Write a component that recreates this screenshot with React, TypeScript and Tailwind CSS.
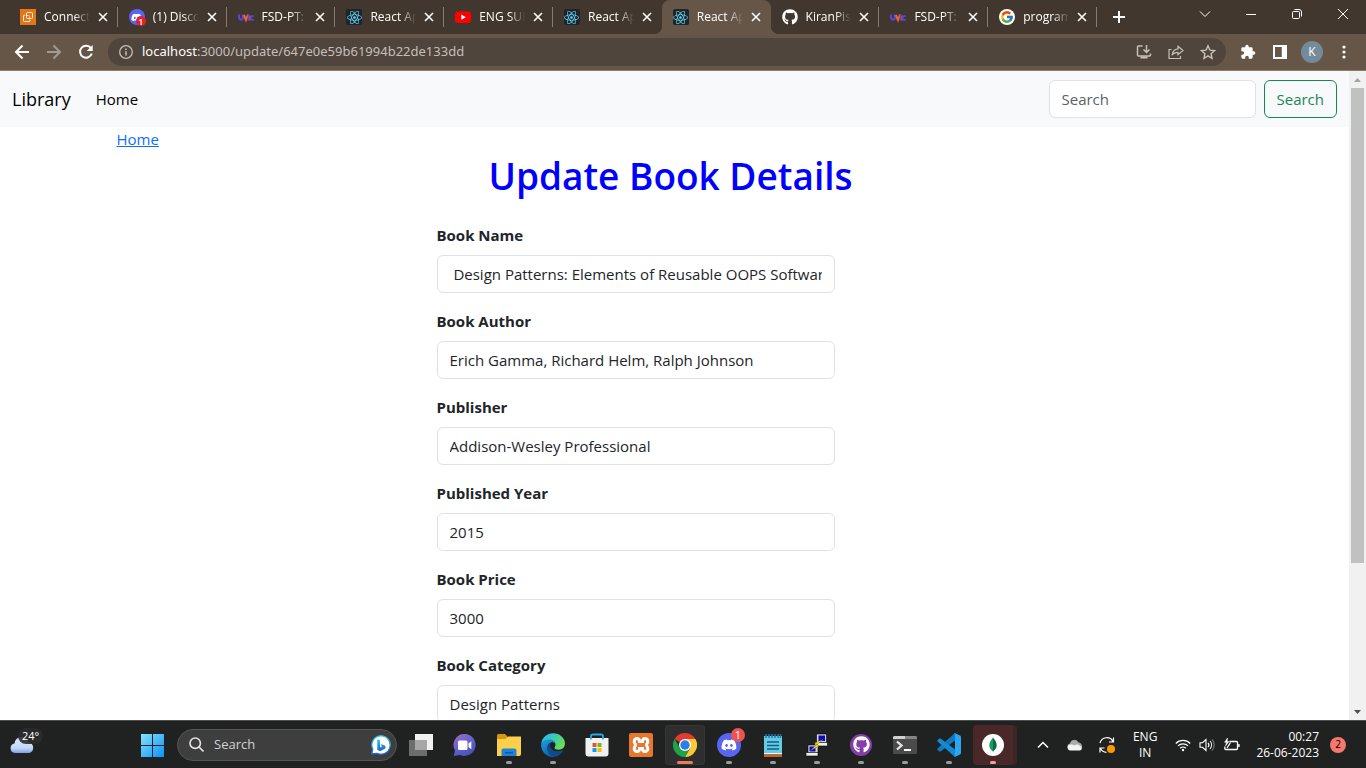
import type { ReactNode } from "react";
import { FaDiscord, FaGithub, FaReact } from "react-icons/fa";
import { FcGoogle } from "react-icons/fc";

/* ---------- Favicons ---------- */

function AwsIcon() {
  return (
    <svg width="16" height="16" viewBox="0 0 16 16" fill="none">
      <defs>
        <linearGradient id="aws" x1="0" y1="16" x2="16" y2="0">
          <stop stopColor="#c9551b" />
          <stop offset="1" stopColor="#fb9a16" />
        </linearGradient>
      </defs>
      <rect width="16" height="16" fill="url(#aws)" />
      <g stroke="#fff" strokeOpacity="0.85">
        <rect x="6.5" y="3.5" width="6" height="6" rx="1" />
        <path d="M5 6H4.500a1 1 0 0 0-1 1v4.500a1 1 0 0 0 1 1H9a1 1 0 0 0 1-1V11" />
        <path d="M5.500 6.500h3a1 1 0 0 1 1 1v3" strokeOpacity="0.6" />
      </g>
    </svg>
  );
}

function DiscordFavicon() {
  return (
    <span className="relative flex size-4 items-center justify-center rounded-full bg-[#5865f2] text-white">
      <FaDiscord size={11} />
      <span className="absolute -right-px -bottom-px flex size-[10px] items-center justify-center rounded-full bg-[#e3202b] text-[9px] leading-none font-semibold">
        1
      </span>
    </span>
  );
}

function UnicIcon() {
  return (
    <svg width="16" height="16" viewBox="0 0 16 16" fill="none">
      <path d="M1 5.500v3.200a1.900 1.900 0 0 0 3.800 0V5.500" stroke="#5b46e8" strokeWidth="1.900" />
      <path d="M5.800 6 8 11l2-5.500" stroke="#f0642f" strokeWidth="2" />
      <path d="M10.300 5v6.500" stroke="#5b46e8" strokeWidth="1.200" />
      <path d="M12 6.500v5" stroke="#f0642f" strokeWidth="1.200" />
      <path d="M15.800 7.400a2 2 0 1 0 0 3.200" stroke="#5b46e8" strokeWidth="1.500" />
    </svg>
  );
}

function ReactIcon() {
  return (
    <span className="flex size-4 items-center justify-center rounded-[2px] bg-[#20232a] text-[#61dafb]">
      <FaReact size={15} />
    </span>
  );
}

function YoutubeIcon() {
  return (
    <svg width="16" height="16" viewBox="0 0 16 16">
      <rect y="2.500" width="16" height="11.500" rx="3" fill="#f00" />
      <path d="M6.300 5.600v5.200l4.500-2.600z" fill="#fff" />
    </svg>
  );
}

function GoogleIcon() {
  return (
    <span className="flex size-4 items-center justify-center rounded-full bg-white">
      <FcGoogle size={14} />
    </span>
  );
}

/* ---------- Browser chrome ---------- */

type Tab = { title: string; icon: ReactNode; active?: boolean; divider?: boolean };

const tabs: Tab[] = [
  { title: "Connect to instance", icon: <AwsIcon />, divider: true },
  { title: "(1) Discord", icon: <DiscordFavicon />, divider: true },
  { title: "FSD-PT: Class", icon: <UnicIcon />, divider: true },
  { title: "React App", icon: <ReactIcon />, divider: true },
  { title: "ENG SUB", icon: <YoutubeIcon />, divider: true },
  { title: "React App", icon: <ReactIcon /> },
  { title: "React App", icon: <ReactIcon />, active: true },
  { title: "KiranPisal", icon: <FaGithub size={16} />, divider: true },
  { title: "FSD-PT: Class", icon: <UnicIcon />, divider: true },
  { title: "programming", icon: <GoogleIcon />, divider: true },
];

function CloseGlyph() {
  return (
    <svg width="10" height="10" viewBox="0 0 10 10" stroke="currentColor" strokeWidth="1.600">
      <path d="m1 1 8 8M9 1 1 9" />
    </svg>
  );
}

function TabStrip() {
  return (
    <div className="flex h-[34px] shrink-0 bg-[#42372e] pl-[9px] text-white">
      <div className="flex w-[1088px]">
        {tabs.map((tab, i) => (
          <div
            key={i}
            className={`relative flex min-w-0 flex-1 items-center pr-[10px] pl-[11px] ${
              tab.active ? "rounded-t-lg bg-[#665647]" : ""
            }`}
          >
            {tab.active && (
              <>
                <span className="absolute bottom-0 -left-2 size-2 bg-[radial-gradient(circle_at_0_0,transparent_8px,#665647_8px)]" />
                <span className="absolute -right-2 bottom-0 size-2 bg-[radial-gradient(circle_at_100%_0,transparent_8px,#665647_8px)]" />
              </>
            )}
            <span className="shrink-0">{tab.icon}</span>
            <span className="ml-2 min-w-0 flex-1 overflow-hidden mask-r-from-65% mask-r-to-100% text-xs whitespace-nowrap">
              {tab.title}
            </span>
            <button aria-label="Close tab" className="ml-2 shrink-0">
              <CloseGlyph />
            </button>
            {tab.divider && <span className="absolute top-[7px] right-0 h-5 w-px bg-[#857b72]" />}
          </div>
        ))}
      </div>
      <button aria-label="New tab" className="ml-4 flex items-center">
        <svg width="12" height="12" viewBox="0 0 12 12" stroke="currentColor" strokeWidth="2">
          <path d="M6 0v12M0 6h12" />
        </svg>
      </button>
      <div className="ml-auto flex h-7 items-center">
        <button aria-label="Search tabs" className="flex w-[46px] justify-center">
          <svg width="12" height="12" viewBox="0 0 12 12" fill="none" stroke="currentColor">
            <path d="m1 3.500 5 5 5-5" />
          </svg>
        </button>
        <button aria-label="Minimize" className="flex w-[46px] justify-center">
          <svg width="10" height="10" viewBox="0 0 10 10" stroke="currentColor">
            <path d="M0 5.500h10" />
          </svg>
        </button>
        <button aria-label="Restore" className="flex w-[46px] justify-center">
          <svg width="10" height="10" viewBox="0 0 10 10" fill="none" stroke="currentColor">
            <rect x="0.500" y="2.500" width="7" height="7" rx="1" />
            <path d="M2.500 .5H7a2.500 2.500 0 0 1 2.500 2.500v4.500" />
          </svg>
        </button>
        <button aria-label="Close window" className="flex w-[46px] justify-center">
          <svg width="10" height="10" viewBox="0 0 10 10" stroke="currentColor">
            <path d="m0 0 10 10M10 0 0 10" />
          </svg>
        </button>
      </div>
    </div>
  );
}

function Toolbar() {
  return (
    <div className="flex h-[37px] shrink-0 items-center border-b border-[#8c7b6e] bg-[#665647] pr-[14px] pl-[14px] text-white">
      <button aria-label="Back">
        <svg width="16" height="16" viewBox="0 0 16 16" fill="none" stroke="currentColor" strokeWidth="2">
          <path d="M15 8H2.500M8.500 1.500 2 8l6.500 6.500" />
        </svg>
      </button>
      <button aria-label="Forward" className="ml-4 text-[#a39a91]">
        <svg width="16" height="16" viewBox="0 0 16 16" fill="none" stroke="currentColor" strokeWidth="2">
          <path d="M1 8h12.500M7.500 1.500 14 8l-6.500 6.500" />
        </svg>
      </button>
      <button aria-label="Reload" className="ml-4">
        <svg width="16" height="16" viewBox="0 0 16 16" fill="none" stroke="currentColor" strokeWidth="2">
          <path d="M13 4.300A6 6 0 1 0 13.800 9.500" />
          <path d="M14.700 1v6h-6z" fill="currentColor" stroke="none" />
        </svg>
      </button>
      <div className="ml-[14px] flex h-7 flex-1 items-center rounded-full bg-[#50453c] pr-[10px] pl-[11px] text-[#c4bfbb]">
        <svg width="14" height="14" viewBox="0 0 14 14" fill="none" stroke="currentColor" strokeWidth="1.300">
          <circle cx="7" cy="7" r="6.300" />
          <path d="M7 6.200v4.300M7 3.500v1.400" strokeWidth="1.500" />
        </svg>
        <span className="ml-[9px] flex-1 font-['Noto_Sans',sans-serif] text-[13px]">
          <span className="text-white">localhost</span>:3000/update/647e0e59b61994b22de133dd
        </span>
        <div className="flex items-center gap-4">
          <button aria-label="Install app">
            <svg width="16" height="16" viewBox="0 0 16 16" fill="none" stroke="currentColor" strokeWidth="1.500">
              <path d="M6.500 2H2.500a1 1 0 0 0-1 1v8a1 1 0 0 0 1 1h11a1 1 0 0 0 1-1V9.500M10.500 1v7M7.500 5.500l3 3 3-3" />
              <path d="M4.500 13.500h7" strokeWidth="2" />
            </svg>
          </button>
          <button aria-label="Share">
            <svg width="16" height="16" viewBox="0 0 16 16" fill="none" stroke="currentColor" strokeWidth="1.200">
              <path d="M3.500 5.500H1v9h11.500V12" />
              <path d="M10 2.200 15 6.500l-5 4.200V8.300c-3 0-4.800 1-6 3 .4-3.400 2.500-6 6-6.400z" />
            </svg>
          </button>
          <button aria-label="Bookmark">
            <svg width="16" height="16" viewBox="0 0 16 16" fill="none" stroke="currentColor" strokeWidth="1.400">
              <path d="m8 1.800 1.900 4.300 4.600.5-3.400 3.100.9 4.600-4-2.400-4 2.400.9-4.600L1.500 6.600l4.600-.5z" />
            </svg>
          </button>
        </div>
      </div>
      <button aria-label="Extensions" className="ml-[14px]">
        <svg width="16" height="16" viewBox="0 0 24 24" fill="currentColor">
          <path d="M20.500 11H19V7a2 2 0 0 0-2-2h-4V3.500a2.500 2.500 0 0 0-5 0V5H4a2 2 0 0 0-2 2v3.800h1.500a2.700 2.700 0 0 1 0 5.400H2V20a2 2 0 0 0 2 2h3.800v-1.500a2.700 2.700 0 0 1 5.400 0V22H17a2 2 0 0 0 2-2v-4h1.500a2.500 2.500 0 0 0 0-5z" />
        </svg>
      </button>
      <button aria-label="Side panel" className="ml-[17px]">
        <svg width="14" height="14" viewBox="0 0 14 14" fill="none" stroke="currentColor" strokeWidth="2">
          <path d="M1 1h12v12H1z" />
          <path d="M11 1v12" strokeWidth="4.500" />
        </svg>
      </button>
      <button className="ml-[14px] flex size-[22px] items-center justify-center rounded-full bg-[#748c99] text-xs">
        K
      </button>
      <button aria-label="Menu" className="ml-[13px]">
        <svg width="16" height="16" viewBox="0 0 16 16" fill="currentColor">
          <circle cx="8" cy="3" r="1.600" />
          <circle cx="8" cy="8" r="1.600" />
          <circle cx="8" cy="13" r="1.600" />
        </svg>
      </button>
    </div>
  );
}

/* ---------- Library page ---------- */

const fields = [
  { id: "name", label: "Book Name", value: "\u00a0Design Patterns: Elements of Reusable OOPS Software" },
  { id: "author", label: "Book Author", value: "Erich Gamma, Richard Helm, Ralph Johnson" },
  { id: "publisher", label: "Publisher", value: "Addison-Wesley Professional" },
  { id: "year", label: "Published Year", value: "2015" },
  { id: "price", label: "Book Price", value: "3000" },
  { id: "category", label: "Book Category", value: "Design Patterns" },
];

function Navbar() {
  return (
    <nav className="flex h-14 items-center bg-[#f8f9fa] px-3 text-[15px] text-black">
      <a href="#library" className="text-lg">
        Library
      </a>
      <a href="#home" className="ml-[25px]">
        Home
      </a>
      <form className="ml-auto flex gap-2">
        <input
          type="search"
          aria-label="Search"
          placeholder="Search"
          className="h-[38px] w-[207px] rounded-md border border-[#dee2e6] bg-white px-3 placeholder:text-[#5c6268]"
        />
        <button type="button" className="h-[38px] rounded-md border border-[#198754] px-3 text-[#198754]">
          Search
        </button>
      </form>
    </nav>
  );
}

function BookForm() {
  return (
    <main className="mx-auto max-w-[1140px] px-3 text-[15px] leading-6">
      <a href="#home" className="block w-fit text-[#0d6efd] underline">
        Home
      </a>
      <h1 className="mb-[22px] pr-2 text-center text-[37px] leading-[50px] font-semibold text-[#0000ff]">
        Update Book Details
      </h1>
      <form className="ml-80 flex w-[398px] flex-col gap-4">
        {fields.map((f) => (
          <div key={f.id} className="flex flex-col gap-2">
            <label htmlFor={f.id} className="font-bold">
              {f.label}
            </label>
            <input
              id={f.id}
              defaultValue={f.value}
              className="h-[38px] rounded-md border border-[#dee2e6] bg-white px-3"
            />
          </div>
        ))}
      </form>
    </main>
  );
}

function Scrollbar() {
  return (
    <div className="flex w-[17px] shrink-0 flex-col items-center bg-[#f1f1f1]">
      <svg width="17" height="17" viewBox="0 0 17 17">
        <path d="M5 11h7L8.500 7z" fill="#a3a3a3" />
      </svg>
      <div className="h-3/4 max-h-[475px] w-[13px] bg-[#c1c1c1]" />
      <svg width="17" height="17" viewBox="0 0 17 17" className="mt-auto">
        <path d="M5 7h7l-3.500 4z" fill="#505050" />
      </svg>
    </div>
  );
}

/* ---------- Taskbar ---------- */

function WeatherIcon() {
  return (
    <svg width="25" height="18" viewBox="0 0 25 18">
      <defs>
        <linearGradient id="wx" x1="0" y1="0" x2="0" y2="1">
          <stop stopColor="#dbe8fb" />
          <stop offset="0.700" stopColor="#c2d7f7" />
          <stop offset="1" stopColor="#7d9ee6" />
        </linearGradient>
      </defs>
      <path d="M5 17a4.800 4.800 0 0 1-.5-9.500C5 3.500 8 1 11.500 1c3.200 0 5.800 2 6.600 5.200a5.500 5.500 0 0 1 1 10.800z" fill="url(#wx)" />
    </svg>
  );
}

function WindowsIcon() {
  return (
    <svg width="24" height="24" viewBox="0 0 24 24">
      <defs>
        <linearGradient id="win" x1="0" y1="0" x2="24" y2="24" gradientUnits="userSpaceOnUse">
          <stop stopColor="#8be4ff" />
          <stop offset="1" stopColor="#0a93f5" />
        </linearGradient>
      </defs>
      <path d="M1 1h11v11H1zM13 1h11v11H13zM1 13h11v11H1zM13 13h11v11H13z" fill="url(#win)" />
    </svg>
  );
}

function BingIcon() {
  return (
    <svg width="20" height="20" viewBox="0 0 20 20">
      <defs>
        <linearGradient id="bing" x1="0" y1="0" x2="0" y2="1">
          <stop stopColor="#32c6e8" />
          <stop offset="1" stopColor="#1b62d8" />
        </linearGradient>
      </defs>
      <path d="M10 .8a9.200 9.200 0 1 1-4 17.500L.8 19l.9-5A9.200 9.200 0 0 1 10 .8z" fill="#fff" stroke="url(#bing)" strokeWidth="1.300" />
      <path d="M6.300 4.200 9 5.200v7.300l1.800-1-.9-2.500 4 1.500c1 .8 1 2.500 0 3.200L9 16.300l-2.700-1.600z" fill="url(#bing)" />
    </svg>
  );
}

function TaskViewIcon() {
  return (
    <svg width="24" height="24" viewBox="0 0 24 24">
      <path d="M6 1h18v16H6z" fill="#f1f1f1" />
      <path d="M0 7h18v16H0z" fill="#6d6d6d" />
      <path d="M6 7h12v10H6z" fill="#a6a6a6" />
    </svg>
  );
}

function ChatIcon() {
  return (
    <svg width="24" height="24" viewBox="0 0 24 24">
      <defs>
        <linearGradient id="chat" x1="0" y1="0" x2="0.600" y2="1">
          <stop stopColor="#a06fc0" />
          <stop offset="0.600" stopColor="#5f62ce" />
          <stop offset="1" stopColor="#4c50ba" />
        </linearGradient>
      </defs>
      <path d="M12 1a11 11 0 1 1-5 21L.8 23l1.200-5.500A11 11 0 0 1 12 1z" fill="url(#chat)" />
      <rect x="5" y="7.500" width="9.500" height="9.500" rx="1.500" fill="#fff" />
      <path d="m15.500 10.500 2.800-2.300v8L15.500 14z" fill="#fff" />
    </svg>
  );
}

function ExplorerIcon() {
  return (
    <svg width="24" height="24" viewBox="0 0 24 24">
      <path d="M0 2.500A1.500 1.500 0 0 1 1.500 1H8l2.500 2.500V8H0z" fill="#d99611" />
      <path d="M0 6h8.500L11 3.500h13V21a2 2 0 0 1-2 2H0z" fill="#fdd04c" />
      <path d="M4.500 17.500a2 2 0 0 1 2-2h11a2 2 0 0 1 2 2V23h-15z" fill="#2083d5" />
      <path d="M8 19h8v1.500H8z" fill="#0b5da9" />
    </svg>
  );
}

function EdgeIcon() {
  return (
    <svg width="24" height="24" viewBox="0 0 24 24">
      <defs>
        <linearGradient id="edgeA" x1="0" y1="0" x2="1" y2="0.400">
          <stop stopColor="#2bb3ef" />
          <stop offset="0.500" stopColor="#35c8c0" />
          <stop offset="1" stopColor="#68dd55" />
        </linearGradient>
        <linearGradient id="edgeB" x1="0" y1="0" x2="0.500" y2="1">
          <stop stopColor="#1fa2df" />
          <stop offset="1" stopColor="#0c5fb0" />
        </linearGradient>
      </defs>
      <path d="M.2 10.500C1 4.500 5.800.2 12 .2c7 0 12 5 12 10.300 0 3.800-2.800 6.200-6.200 6.200-2.800 0-4.300-1-4.300-2 0-.7 1-1.200 1-3 0-2.800-2.300-4.500-5.500-4.500C5.500 7.200 2 8.200.2 10.500z" fill="url(#edgeA)" />
      <path d="M.1 12C.1 8.500 3.600 6.500 8 6.500c4 0 6.500 2.400 6.500 4.700 0-1-1-2-2.800-2-3.200 0-5.200 2.500-5.200 5.800 0 4.500 3.700 8 8 8.600-.8.300-1.700.4-2.600.4A12 12 0 0 1 .1 12z" fill="url(#edgeB)" />
      <path d="M9.600 10.200c-2 1.200-3.200 3.200-3.200 5.600 0 4.700 4 8 8 7.900 3.300-.8 6.200-3 7.800-6 .2-.4-.2-.7-.5-.5-4.800 2.400-12.200 1-12.500-4.700 0-.8.100-1.600.4-2.300z" fill="#114a8b" />
    </svg>
  );
}

function StoreIcon() {
  return (
    <svg width="24" height="24" viewBox="0 0 24 24">
      <path d="M6 6.500V3.200A1.700 1.700 0 0 1 7.700 1.500h8.600A1.700 1.700 0 0 1 18 3.200v3.300" fill="none" stroke="#2aa9e8" strokeWidth="1.800" />
      <path d="M.5 5h23v15.500a3 3 0 0 1-3 3h-17a3 3 0 0 1-3-3z" fill="#f1f1f1" />
      <path d="M6 5v1.500M18 5v1.500" stroke="#2aa9e8" strokeWidth="1.800" />
      <path d="M7.500 10h4v4h-4z" fill="#f25022" />
      <path d="M12.500 10h4v4h-4z" fill="#7fba00" />
      <path d="M7.500 15h4v4h-4z" fill="#00a4ef" />
      <path d="M12.500 15h4v4h-4z" fill="#ffb900" />
    </svg>
  );
}

function XamppIcon() {
  return (
    <span className="flex size-6 items-center justify-center rounded-[2px] bg-[#e8762c] text-white">
      <svg width="20" height="18" viewBox="0 0 20 18" fill="none" stroke="currentColor" strokeWidth="3">
        <path d="M6 2.500c2 0 2.500 1.500 2.500 3h3c0-1.500.5-3 2.500-3a2.800 2.800 0 0 1 2.800 3c0 2-1.300 2.300-1.300 3.500s1.300 1.500 1.300 3.500a2.800 2.800 0 0 1-2.800 3c-2 0-2.500-1.500-2.500-3h-3c0 1.500-.5 3-2.500 3a2.800 2.800 0 0 1-2.800-3c0-2 1.300-2.300 1.300-3.500S3.200 7.500 3.200 5.500a2.800 2.800 0 0 1 2.800-3z" />
      </svg>
    </span>
  );
}

function ChromeIcon() {
  return (
    <svg width="24" height="24" viewBox="0 0 24 24">
      <path d="M12 12 1.600 6A12 12 0 0 1 22.400 6z" fill="#e33b2e" />
      <path d="M12 6h10.400A12 12 0 0 1 12 24l5.200-9z" fill="#fcc934" />
      <path d="M1.600 6 6.800 15 12 18l5.200-3L12 24A12 12 0 0 1 1.600 6z" fill="#1ea446" />
      <circle cx="12" cy="12" r="6" fill="#fff" />
      <circle cx="12" cy="12" r="4.700" fill="#2f7de9" />
    </svg>
  );
}

function DiscordAppIcon() {
  return (
    <span className="relative flex size-6 items-center justify-center rounded-full bg-[#5865f2] text-white">
      <FaDiscord size={16} />
      <span className="absolute -top-[5px] -right-1 flex size-[14px] items-center justify-center rounded-full bg-[#ee5350] text-[11px] leading-none">
        1
      </span>
    </span>
  );
}

function NotepadIcon() {
  return (
    <svg width="24" height="24" viewBox="0 0 24 24">
      <path d="M3 3h18v18H3z" fill="#66cbe4" />
      <path d="M3 20h18v1.500H3z" fill="#f3f3f3" />
      <path d="M3 21.500h18V24H3z" fill="#c8631d" />
      <path d="M5 1v4M8 1v4M11 1v4M14 1v4M17 1v4M19.500 1v4" stroke="#1d7aa5" strokeWidth="1.500" />
      <path d="M6 9h12M6 12.500h12M6 16h12" stroke="#125f84" strokeWidth="1.700" />
    </svg>
  );
}

function PuttyIcon() {
  return (
    <svg width="24" height="24" viewBox="0 0 24 24">
      <g stroke="#000" strokeWidth="0.600">
        <path d="M11.500 1h10v9h-10z" fill="#d6d6d6" />
        <path d="M9.500 9.500h13v3.500h-13z" fill="#eee" />
        <path d="M3 12h10v8H3z" fill="#d6d6d6" />
        <path d="M1 19.500h12V23H1z" fill="#eee" />
      </g>
      <path d="M13.500 2.500h6.500v5.500h-6.500zM4.500 13.500h6v5h-6z" fill="#0808cf" />
      <path d="m18 6.500-8 3.500 2 1.500-6.500 6 8.500-4.500-2-1.500z" fill="#ffee12" stroke="#7a7000" strokeWidth="0.500" />
    </svg>
  );
}

function GithubAppIcon() {
  return (
    <span className="flex size-[22px] items-center justify-center rounded-full bg-[#863cab] text-white">
      <FaGithub size={17} />
    </span>
  );
}

function TerminalIcon() {
  return (
    <svg width="24" height="24" viewBox="0 0 24 24">
      <rect y="3" width="24" height="18" rx="1.500" fill="#4b4b4b" />
      <path d="M0 6V4.500A1.500 1.500 0 0 1 1.500 3H12v3z" fill="#d0d0d0" />
      <path d="M12 3h10.500A1.500 1.500 0 0 1 24 4.500V6H12z" fill="#858585" />
      <path d="m4 8.500 4.500 4L4 16.500" fill="none" stroke="#e6e6e6" strokeWidth="2.300" />
      <path d="M11 17h7" stroke="#fff" strokeWidth="2" />
    </svg>
  );
}

function VscodeIcon() {
  return (
    <svg width="24" height="24" viewBox="0 0 24 24">
      <path d="M18 0 .5 15.500c-.4.500-.3 1 0 1.300l1.600 1.500c.4.400 1 .4 1.500.1L20 6z" fill="#0f79c4" />
      <path d="M18 24 .5 8.500c-.4-.5-.3-1 0-1.300l1.600-1.500c.4-.4 1-.4 1.500-.1L20 18z" fill="#1489d4" />
      <path d="M17 .2c.4-.2.800-.2 1.200 0l4.800 2.300c.6.300 1 .8 1 1.500v16c0 .7-.4 1.200-1 1.500l-4.800 2.300c-.4.200-.8.200-1.200 0 .6 0 1-.5 1-1.200V1.400c0-.7-.4-1.200-1-1.200z" fill="#2ba6ef" />
    </svg>
  );
}

function MongoIcon() {
  return (
    <svg width="22" height="22" viewBox="0 0 22 22">
      <circle cx="11" cy="11" r="11" fill="#fff" />
      <path d="M11 3.500C8.500 6.500 7.300 8.800 7.300 11.300c0 2.600 1.500 4.500 3.400 6l.3 1.500z" fill="#12a05f" />
      <path d="M11 3.500c2.500 3 3.700 5.300 3.700 7.800 0 2.600-1.500 4.500-3.400 6l-.3 1.500z" fill="#0b6b43" />
    </svg>
  );
}

type AppEntry = { name: string; icon: ReactNode; state?: "running" | "focused" | "alert" };

const apps: AppEntry[] = [
  { name: "Task view", icon: <TaskViewIcon /> },
  { name: "Chat", icon: <ChatIcon /> },
  { name: "File Explorer", icon: <ExplorerIcon />, state: "running" },
  { name: "Edge", icon: <EdgeIcon />, state: "running" },
  { name: "Store", icon: <StoreIcon /> },
  { name: "XAMPP", icon: <XamppIcon /> },
  { name: "Chrome", icon: <ChromeIcon />, state: "focused" },
  { name: "Discord", icon: <DiscordAppIcon />, state: "running" },
  { name: "Notepad", icon: <NotepadIcon />, state: "running" },
  { name: "PuTTY", icon: <PuttyIcon />, state: "running" },
  { name: "GitHub Desktop", icon: <GithubAppIcon />, state: "running" },
  { name: "Terminal", icon: <TerminalIcon />, state: "running" },
  { name: "VS Code", icon: <VscodeIcon />, state: "running" },
  { name: "MongoDB Compass", icon: <MongoIcon />, state: "alert" },
];

const tile = {
  none: "",
  running: "",
  focused: "bg-[#2e2e2e] ring-1 ring-[#363636] ring-inset",
  alert: "bg-[#4a282a] shadow-[4px_0_0_#3f2426]",
};

const marker = {
  none: "bg-transparent",
  running: "w-[6px] bg-[#9b9b9b]",
  focused: "w-4 bg-[#f2785c]",
  alert: "w-[6px] bg-[#f99ba0]",
};

function Tray() {
  return (
    <div className="ml-auto flex items-center pr-5 text-xs text-white">
      <button aria-label="Show hidden icons">
        <svg width="12" height="12" viewBox="0 0 12 12" fill="none" stroke="currentColor" strokeWidth="1.500">
          <path d="m1 8.500 5-5 5 5" />
        </svg>
      </button>
      <svg className="ml-[18px]" width="16" height="12" viewBox="0 0 16 12">
        <path d="M3.500 11A3.300 3.300 0 0 1 3 4.500 4.500 4.500 0 0 1 11.500 3.500 4 4 0 0 1 13 11z" fill="#a9a9a9" />
        <path d="M3.500 11.500a3 3 0 0 1 .3-6c1.500-.2 2.500.5 3.500 1 1.500-1.500 4.500-1.500 5.500.5a2.300 2.300 0 0 1 .2 4.500z" fill="#f4f4f4" />
      </svg>
      <svg className="ml-4" width="16" height="18" viewBox="0 0 16 18" fill="none" stroke="currentColor" strokeWidth="1.200">
        <path d="M1 7a7 7 0 0 1 13-1.500M14.500 1.500v4.500H10M1 16.500V12h4.500M1.500 12.500a7 7 0 0 0 6 3.800" />
        <circle cx="12" cy="13" r="4" fill="#ff9800" stroke="none" />
      </svg>
      <div className="ml-[18px] text-center leading-4">
        ENG
        <br />
        IN
      </div>
      <svg className="ml-[18px]" width="16" height="14" viewBox="0 0 16 14" fill="none" stroke="currentColor" strokeWidth="1.200">
        <path d="M.8 5.500a10 10 0 0 1 14.400 0M3 7.900a7 7 0 0 1 10 0M5.200 10.200a4 4 0 0 1 5.600 0" />
        <circle cx="8" cy="12" r="1.200" fill="currentColor" stroke="none" />
      </svg>
      <svg className="ml-2" width="16" height="14" viewBox="0 0 16 14" fill="none" stroke="currentColor" strokeWidth="1.100">
        <path d="M1 4.700h2.500L7 1.500v11L3.500 9.300H1zM9 4.800a3.300 3.300 0 0 1 0 4.400M11 3a6 6 0 0 1 0 8" />
        <path d="M13 1.300a8.500 8.500 0 0 1 0 11.400" stroke="#777" />
      </svg>
      <svg className="ml-2" width="17" height="14" viewBox="0 0 17 14" fill="none" stroke="currentColor" strokeWidth="1.300">
        <path d="M6.500 3.500h7a1 1 0 0 1 1 1v6a1 1 0 0 1-1 1H2.800a1 1 0 0 1-1-1V8.500M16 6v3" />
        <path d="M4.500 0 1.500 4.300h2L2.500 8 6 3.500H4.200z" fill="currentColor" strokeWidth="0.500" />
        <path d="m4 10 3.500-5.500" />
      </svg>
      <div className="ml-4 text-right leading-4">
        00:27
        <br />
        26-06-2023
      </div>
      <span className="ml-[11px] flex size-4 items-center justify-center rounded-full bg-[#f4796b] text-[10px] text-black">
        2
      </span>
    </div>
  );
}

function Taskbar() {
  return (
    <footer className="flex h-12 shrink-0 items-center border-t border-[#4b4d4c] bg-[#202121]">
      <div className="relative ml-[10px] w-[120px] shrink-0">
        <WeatherIcon />
        <span className="absolute -top-2 left-2 rounded-full bg-[#2b2b2b]/90 px-1 text-[11px] leading-4 text-white">
          24°
        </span>
      </div>
      <button aria-label="Start" className="flex w-11 justify-center">
        <WindowsIcon />
      </button>
      <label className="ml-[3px] flex h-8 w-[220px] items-center rounded-full border border-[#555] bg-[#3e3e3e] pr-[5px] pl-[11px]">
        <svg width="15" height="15" viewBox="0 0 15 15" fill="none" stroke="#e4e4e4" strokeWidth="1.600">
          <circle cx="6.200" cy="6.200" r="5.200" />
          <path d="m10 10 4.500 4.500" />
        </svg>
        <input
          aria-label="Taskbar search"
          placeholder="Search"
          className="ml-[10px] min-w-0 flex-1 text-[13px] placeholder:text-[#d2d2d2]"
        />
        <BingIcon />
      </label>
      <div className="ml-[2px] flex">
        {apps.map((app) => (
          <button
            key={app.name}
            aria-label={app.name}
            className={`relative mx-[2px] flex size-10 items-center justify-center rounded ${tile[app.state ?? "none"]}`}
          >
            {app.icon}
            <span
              className={`absolute bottom-px left-1/2 h-[3px] -translate-x-1/2 rounded-full ${marker[app.state ?? "none"]}`}
            />
          </button>
        ))}
      </div>
      <Tray />
    </footer>
  );
}

export default function App() {
  return (
    <div className="flex h-screen flex-col overflow-hidden bg-white font-['Open_Sans','Noto_Sans',sans-serif] text-[#212529]">
      <TabStrip />
      <Toolbar />
      <div className="flex min-h-0 flex-1">
        <div className="min-w-0 flex-1 overflow-hidden">
          <Navbar />
          <BookForm />
        </div>
        <Scrollbar />
      </div>
      <Taskbar />
    </div>
  );
}
